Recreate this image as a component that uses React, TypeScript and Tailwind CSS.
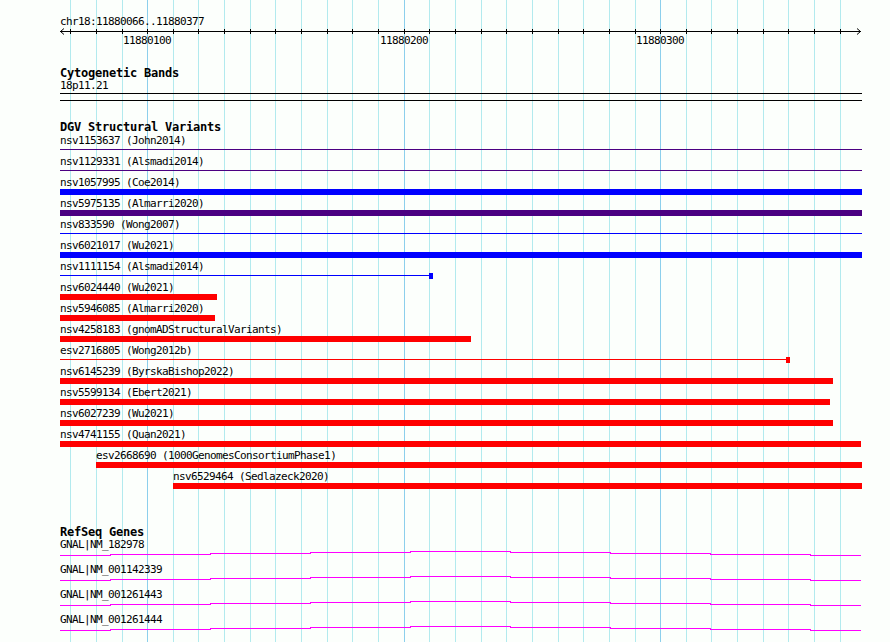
import React from "react";

type Variant = {
  id: string;
  study: string;
  start: number;
  end: number;
  color: string;
  thin?: boolean;
  cap?: boolean;
};

const BLUE = "#0000ff";
const RED = "#ff0000";
const INDIGO = "#4b0082";

const variants: Variant[] = [
  { id: "nsv1153637", study: "John2014", start: 60, end: 862, color: INDIGO, thin: true },
  { id: "nsv1129331", study: "Alsmadi2014", start: 60, end: 862, color: INDIGO, thin: true },
  { id: "nsv1057995", study: "Coe2014", start: 60, end: 862, color: BLUE },
  { id: "nsv5975135", study: "Almarri2020", start: 60, end: 862, color: INDIGO },
  { id: "nsv833590", study: "Wong2007", start: 60, end: 862, color: BLUE, thin: true },
  { id: "nsv6021017", study: "Wu2021", start: 60, end: 862, color: BLUE },
  { id: "nsv1111154", study: "Alsmadi2014", start: 60, end: 433, color: BLUE, thin: true, cap: true },
  { id: "nsv6024440", study: "Wu2021", start: 60, end: 217, color: RED },
  { id: "nsv5946085", study: "Almarri2020", start: 60, end: 215, color: RED },
  { id: "nsv4258183", study: "gnomADStructuralVariants", start: 60, end: 471, color: RED },
  { id: "esv2716805", study: "Wong2012b", start: 60, end: 790, color: RED, thin: true, cap: true },
  { id: "nsv6145239", study: "ByrskaBishop2022", start: 60, end: 833, color: RED },
  { id: "nsv5599134", study: "Ebert2021", start: 60, end: 830, color: RED },
  { id: "nsv6027239", study: "Wu2021", start: 60, end: 833, color: RED },
  { id: "nsv4741155", study: "Quan2021", start: 60, end: 861, color: RED },
  { id: "esv2668690", study: "1000GenomesConsortiumPhase1", start: 96, end: 862, color: RED },
  { id: "nsv6529464", study: "Sedlazeck2020", start: 173, end: 862, color: RED },
];

const genes = ["GNAL|NM_182978", "GNAL|NM_001142339", "GNAL|NM_001261443", "GNAL|NM_001261444"];

// one grid line every 10bp
const gridX = Array.from({ length: 31 }, (_, k) => Math.round(70.2 + 25.65 * k));
const majors: Record<number, string> = { 3: "11880100", 13: "11880200", 23: "11880300" };

const LEFT = 60;

function Ruler() {
  return (
    <svg width={802} height={7} className="block" shapeRendering="crispEdges">
      <line x1={0} y1={3.5} x2={801} y2={3.5} stroke="#000" strokeWidth={1} />
      {gridX.map((x) => (
        <line key={x} x1={x - LEFT + 0.5} y1={1} x2={x - LEFT + 0.5} y2={6} stroke="#000" strokeWidth={1} />
      ))}
      <polyline points="4,0.5 0.5,3.5 4,6.5" fill="none" stroke="#000" strokeWidth={1} shapeRendering="auto" />
      <polyline points="797,0.5 800.5,3.5 797,6.5" fill="none" stroke="#000" strokeWidth={1} shapeRendering="auto" />
    </svg>
  );
}

function VariantRow({ v }: { v: Variant }) {
  const offset = v.start - LEFT;
  const width = v.end - v.start;
  return (
    <div className="h-[21px]">
      <div className="h-[12px] leading-[12px] whitespace-nowrap" style={{ marginLeft: offset }}>
        {v.id} ({v.study})
      </div>
      <div className="h-[6px]" style={{ marginLeft: offset, width }}>
        {v.thin ? (
          <div className="flex h-[6px]">
            <div className="mt-[2px] h-px flex-1" style={{ backgroundColor: v.color }} />
            {v.cap && <div className="h-[6px] w-[4px]" style={{ backgroundColor: v.color }} />}
          </div>
        ) : (
          <div className="h-[6px] w-full" style={{ backgroundColor: v.color }} />
        )}
      </div>
    </div>
  );
}

function GeneRow({ name }: { name: string }) {
  return (
    <div className="h-[25px]">
      <div className="h-[12px] leading-[12px]">{name}</div>
      <svg width={802} height={13} className="block" shapeRendering="crispEdges">
        <path
          d="M0 4.5 H50 V3.5 H150 V2.5 H250 V1.5 H350 V0.5 H450 V1.5 H550 V2.5 H650 V3.5 H750 V4.5 H801"
          fill="none"
          stroke="#ff00ff"
          strokeWidth={1}
        />
      </svg>
    </div>
  );
}

export default function App() {
  return (
    <div className="relative w-[890px] h-[642px] overflow-hidden bg-[#fcfffc] font-['DejaVu_Sans_Mono','Liberation_Mono',monospace] text-[11px] tracking-[-0.62px] text-black">
      {/* grid */}
      {gridX.map((x, k) => (
        <div
          key={x}
          className={`absolute top-0 bottom-0 w-px ${k in majors ? "bg-[#8ccfec]" : "bg-[#b2eaee]"}`}
          style={{ left: x }}
        />
      ))}

      <div className="relative z-10 pl-[60px] pt-[16px] w-[862px]">
        {/* ruler */}
        <div className="h-[12px] leading-[12px]">chr18:11880066..11880377</div>
        <Ruler />
        <div className="relative h-[12px] leading-[12px]">
          {gridX.map((x, k) =>
            majors[k] ? (
              <span key={x} className="absolute top-0" style={{ left: x - LEFT - 24 }}>
                {majors[k]}
              </span>
            ) : null
          )}
        </div>

        {/* Cytogenetic Bands */}
        <div className="mt-[20px] h-[12px] leading-[12px] text-[12px] tracking-[-0.22px] font-bold">Cytogenetic Bands</div>
        <div className="mt-[1px] h-[12px] leading-[12px]">18p11.21</div>
        <div className="mt-[1px] h-[8px] border-y border-black" />

        {/* DGV */}
        <div className="mt-[20px] h-[12px] leading-[12px] text-[12px] tracking-[-0.22px] font-bold">DGV Structural Variants</div>
        <div className="mt-[2px]">
          {variants.map((v) => (
            <VariantRow key={v.id + v.study} v={v} />
          ))}
        </div>

        {/* RefSeq */}
        <div className="mt-[34px] h-[12px] leading-[12px] text-[12px] tracking-[-0.22px] font-bold">RefSeq Genes</div>
        <div className="mt-[1px]">
          {genes.map((g) => (
            <GeneRow key={g} name={g} />
          ))}
        </div>
      </div>
    </div>
  );
}
